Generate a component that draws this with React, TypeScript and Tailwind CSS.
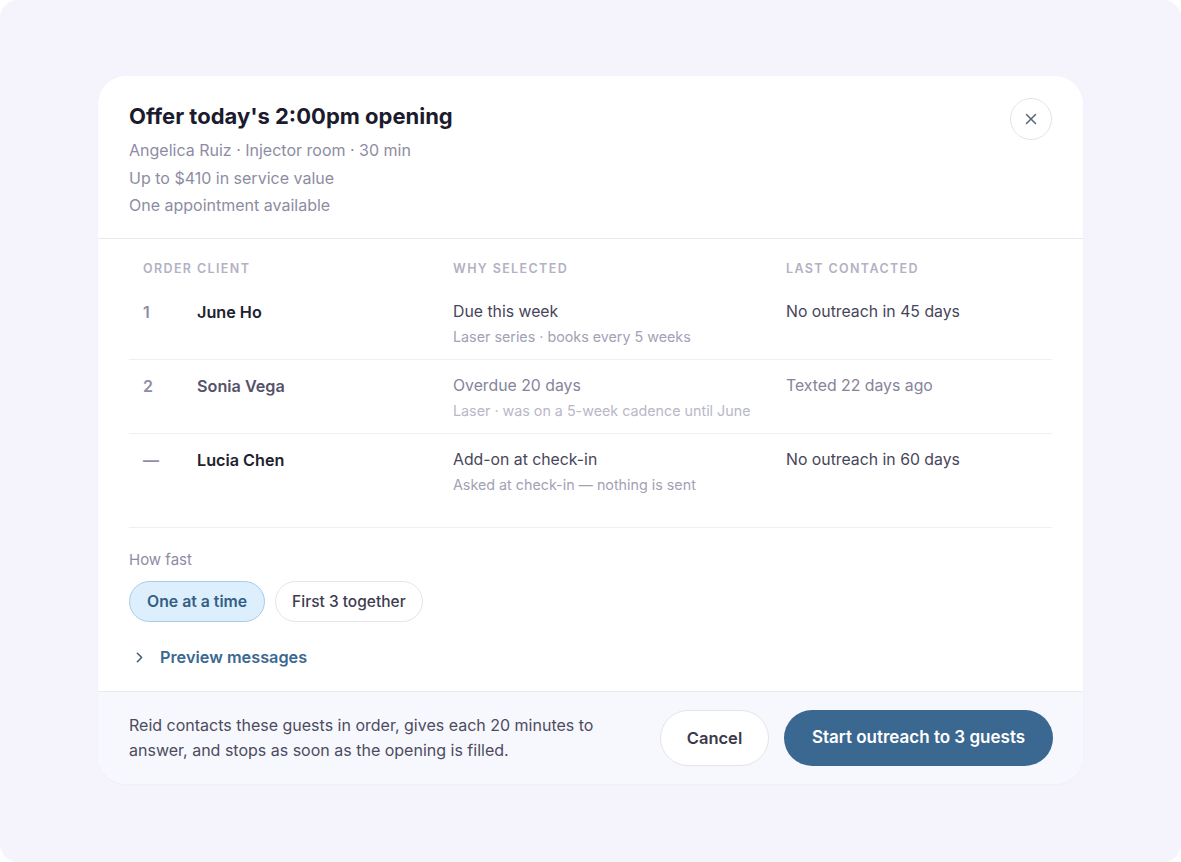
import { X, ChevronRight } from "lucide-react";

type Guest = {
  order: string;
  name: string;
  reason: string;
  detail: string;
  last: string;
  dim?: boolean;
};

const guests: Guest[] = [
  {
    order: "1",
    name: "June Ho",
    reason: "Due this week",
    detail: "Laser series · books every 5 weeks",
    last: "No outreach in 45 days",
  },
  {
    order: "2",
    name: "Sonia Vega",
    reason: "Overdue 20 days",
    detail: "Laser · was on a 5-week cadence until June",
    last: "Texted 22 days ago",
    dim: true,
  },
  {
    order: "—",
    name: "Lucia Chen",
    reason: "Add-on at check-in",
    detail: "Asked at check-in — nothing is sent",
    last: "No outreach in 60 days",
  },
];

const GuestRow = ({ g, last }: { g: Guest; last: boolean }) => (
  <div
    className={`grid grid-cols-[68px_256px_333px_1fr] pt-[14px] ${
      last ? "h-[93px]" : "h-[74px] border-b border-[#eef0f5]"
    }`}
  >
    <div className="pl-[14px] text-[16px] font-semibold text-[#8f8da3] leading-[24px]">{g.order}</div>
    <div className={`text-[16.2px] font-semibold leading-[24px] ${g.dim ? "text-[#55536a]" : "text-[#22212f]"}`}>
      {g.name}
    </div>
    <div>
      <div className={`text-[15.8px] leading-[24px] ${g.dim ? "text-[#86849a]" : "text-[#47455a]"}`}>{g.reason}</div>
      <div className={`text-[14.3px] leading-[22px] mt-[2px] ${g.dim ? "text-[#b9b7c8]" : "text-[#a3a1b5]"}`}>{g.detail}</div>
    </div>
    <div className={`text-[15.8px] leading-[24px] ${g.dim ? "text-[#86849a]" : "text-[#47455a]"}`}>{g.last}</div>
  </div>
);

export default function App() {
  return (
    <div className="bg-white min-h-[862px] font-['Inter','Noto_Sans',sans-serif]">
      <div className="h-[862px] rounded-[18px] bg-[#f5f4fd] pt-[76px] flex justify-center">
        <div className="w-[985px] h-[708px] bg-white rounded-[28px] overflow-hidden flex flex-col shadow-[0_1px_2px_rgba(30,30,60,0.03)]">
          {/* Header */}
          <div className="h-[163px] border-b border-[#e6e8ee] pl-[31px] pr-[31px] pt-[25px] flex justify-between">
            <div>
              <h1 className="text-[22px] font-bold text-[#1c1b2e] leading-[30px]">Offer today's 2:00pm opening</h1>
              <div className="mt-[6px] text-[16px] leading-[27.5px] text-[#8e8ca3]">
                <p>Angelica Ruiz · Injector room · 30 min</p>
                <p>Up to $410 in service value</p>
                <p>One appointment available</p>
              </div>
            </div>
            <button className="mt-[-3px] w-[42px] h-[42px] rounded-full border border-[#e3e3ec] flex items-center justify-center text-[#5a6573]">
              <X className="w-[18px] h-[18px]" strokeWidth={2} />
            </button>
          </div>

          {/* Table */}
          <div className="px-[31px] flex-1">
            <div className="grid grid-cols-[68px_256px_333px_1fr] h-[47px] items-end pb-[8px] text-[12.5px] leading-[18px] font-semibold tracking-[0.11em] text-[#b3b1c4]">
              <div className="pl-[14px]">ORDER</div>
              <div>CLIENT</div>
              <div>WHY SELECTED</div>
              <div>LAST CONTACTED</div>
            </div>
            <div className="border-b border-[#eef0f5]">
              {guests.map((g, i) => (
                <GuestRow key={g.name} g={g} last={i === guests.length - 1} />
              ))}
            </div>

            <div className="pt-[22px]">
              <div className="text-[15px] text-[#8e8ca3] leading-[20px]">How fast</div>
              <div className="mt-[11px] flex gap-[10px]">
                <button className="h-[41px] px-[17px] rounded-full bg-[#ddeefc] border border-[#a9cbe8] text-[15.8px] font-semibold text-[#335f85]">
                  One at a time
                </button>
                <button className="h-[41px] px-[16px] rounded-full bg-white border border-[#e3e5ec] text-[15.5px] font-medium text-[#3e3c50]">
                  First 3 together
                </button>
              </div>
              <button className="mt-[23px] ml-[2px] flex items-center gap-[12px] text-[16.3px] font-semibold text-[#3b6891]">
                <ChevronRight className="w-[17px] h-[17px] text-[#3e5a78]" strokeWidth={2.2} />
                Preview messages
              </button>
            </div>
          </div>

          {/* Footer */}
          <div className="h-[93px] bg-[#f6f8fd] border-t border-[#e8ebf1] pl-[31px] pr-[30px] flex items-center justify-between">
            <p className="text-[16px] leading-[25px] text-[#4d4b5f] w-[490px]">
              Reid contacts these guests in order, gives each 20 minutes to answer, and stops as soon as the opening is filled.
            </p>
            <div className="flex gap-[15px]">
              <button className="h-[56px] w-[109px] rounded-full bg-white border border-[#e3e4ea] text-[16.5px] font-semibold text-[#3b394c]">
                Cancel
              </button>
              <button className="h-[56px] w-[269px] rounded-full bg-[#3a6891] text-[17px] font-semibold text-white">
                Start outreach to 3 guests
              </button>
            </div>
          </div>
        </div>
      </div>
    </div>
  );
}
